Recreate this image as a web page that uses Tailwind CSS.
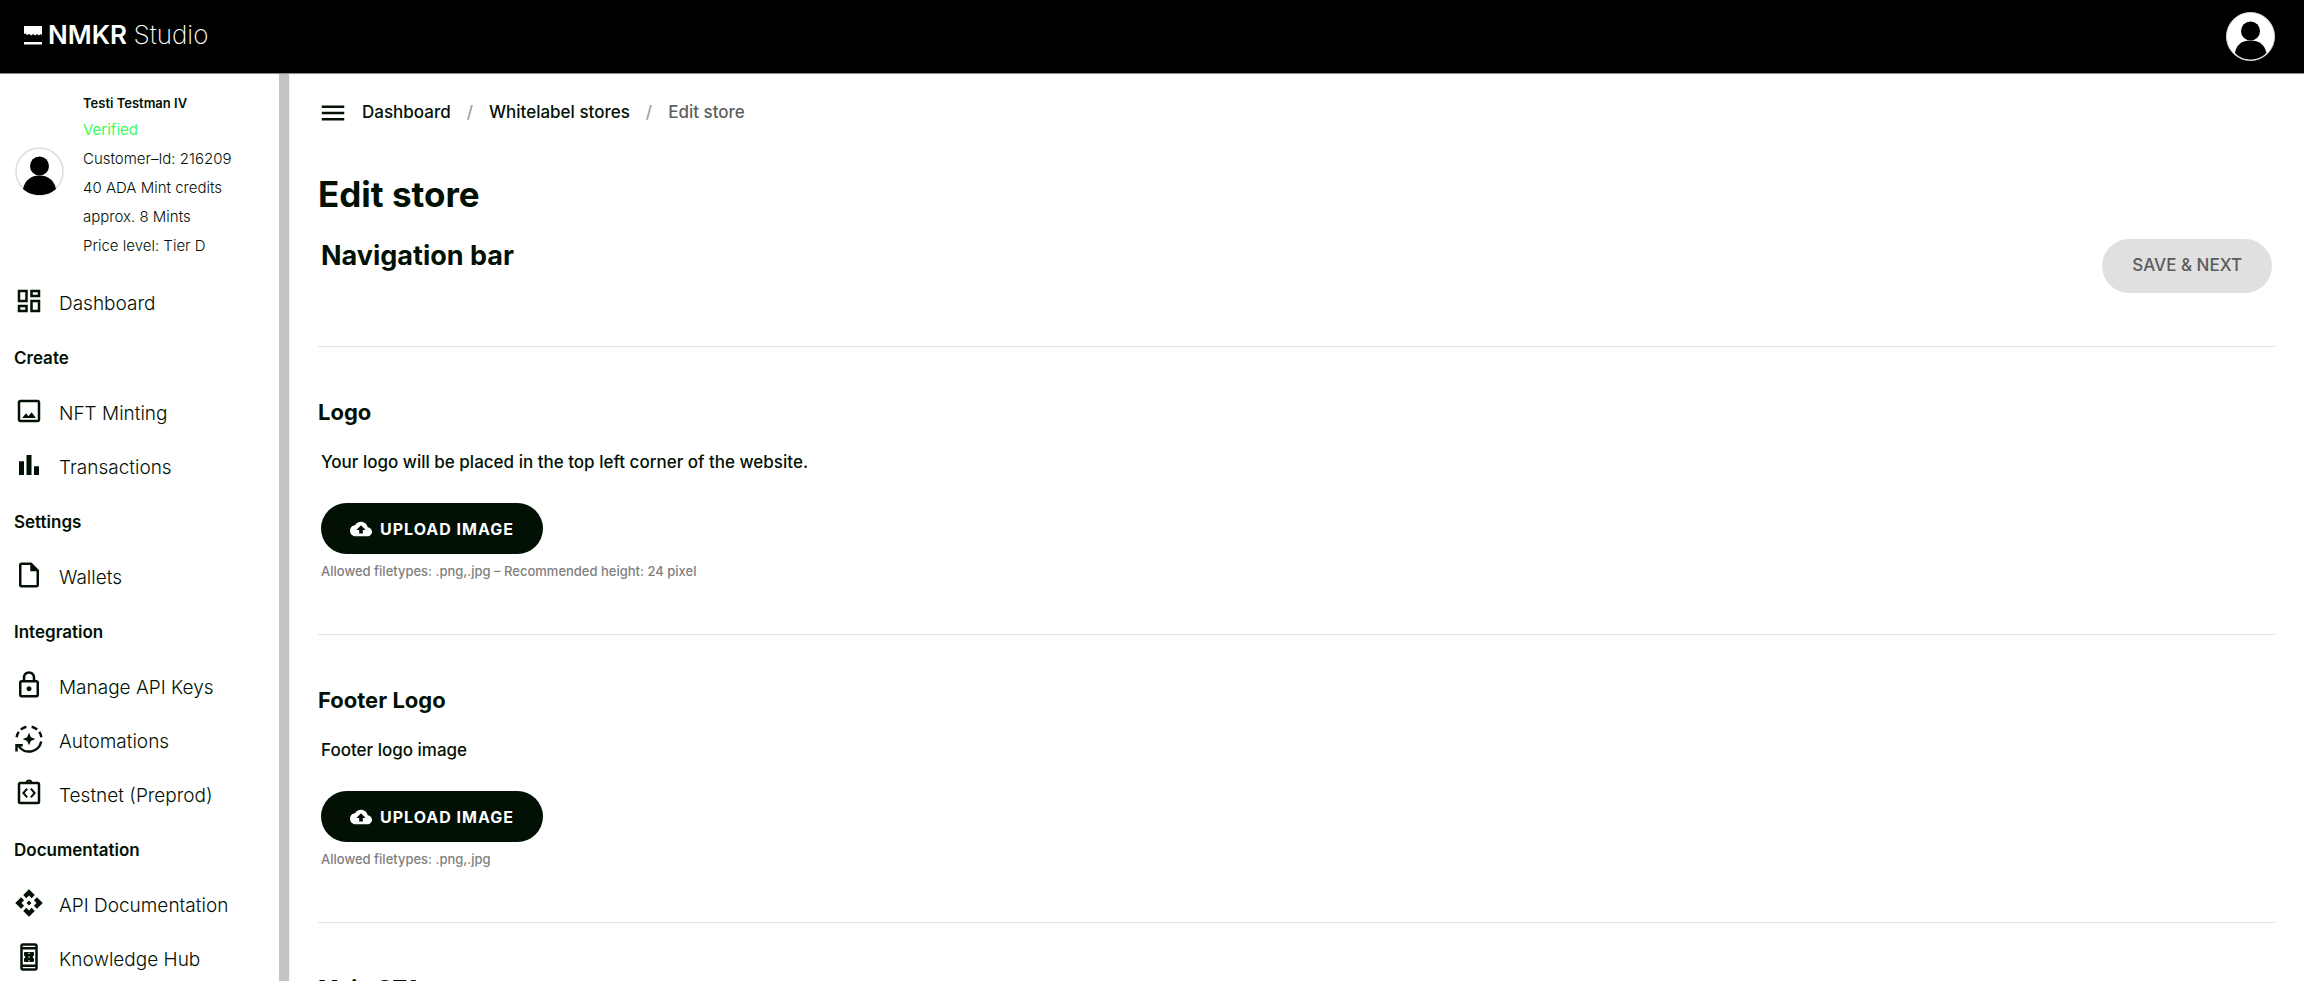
<!DOCTYPE html>
<html lang="en">
<head>
  <meta charset="UTF-8">
  <meta name="viewport" content="width=device-width, initial-scale=1.0">
  <title>Edit store - NMKR Studio</title>
  <script src="https://cdn.jsdelivr.net/npm/@tailwindcss/browser@4"></script>
</head>
<body class="h-screen flex flex-col overflow-hidden bg-white font-['Inter',sans-serif] text-[#021104]">

  <!-- Top bar -->
  <header class="h-[74px] shrink-0 flex items-center justify-between bg-black border-b border-[#8a8a8a] pl-6 pr-[29px]">
    <a href="#" class="flex items-center gap-1.5 text-white text-[26px] leading-8 pb-1">
      <svg class="w-[18px] h-5" viewBox="0 0 18 20" fill="currentColor" aria-hidden="true">
        <path d="M0 1h18v9l-1.500-1-1.500 1.500L13 9l-1.500 1.500L9 9l-1.500 1.500L5 9 3 10 1.500 8.500 0 9z"/>
        <path d="M0 17h18v2.500H0z"/>
      </svg>
      <span class="font-semibold">NMKR <span class="font-extralight">Studio</span></span>
    </a>
    <button type="button" aria-label="Account" class="rounded-full">
      <svg class="w-[49px] h-[49px]" viewBox="0 0 49 49" aria-hidden="true">
        <circle cx="24.500" cy="24.500" r="24" fill="#fff" stroke="#ddd"/>
        <circle cx="24.500" cy="19" r="9.500" fill="#000"/>
        <path d="M9 41C10 33 16 28.500 24.500 28.500S39 33 40.500 41C36 45.500 30 47.500 24.500 47.500S13 45.500 9 41z" fill="#000"/>
      </svg>
    </button>
  </header>

  <div class="flex-1 min-h-0 flex">

    <!-- Sidebar -->
    <aside class="w-[289px] shrink-0 overflow-y-auto [scrollbar-width:none] border-r-[10px] border-[#c4c4c4] shadow-sm">
      <div class="flex items-center gap-[19px] pl-[15px] pt-[17px]">
        <svg class="w-[49px] h-[49px] shrink-0 mb-2" viewBox="0 0 49 49" aria-hidden="true">
          <circle cx="24.500" cy="24.500" r="23.500" fill="#fff" stroke="#ddd" stroke-width="1.500"/>
          <circle cx="24.500" cy="19" r="9.500" fill="#000"/>
          <path d="M8 42C10 33 16 28.500 24.500 28.500S39 33 41 42C36 46.500 30 48 24.500 48S13 46.500 8 42z" fill="#000"/>
        </svg>
        <div class="text-[15px] leading-[29px] font-light">
          <p class="text-[13px] leading-6 font-semibold">Testi Testman IV</p>
          <p class="text-[#3dfb62] font-normal">Verified</p>
          <p>Customer–Id: 216209</p>
          <p>40 ADA Mint credits</p>
          <p>approx. 8 Mints</p>
          <p>Price level: Tier D</p>
        </div>
      </div>

      <nav class="mt-[17px] pl-3.5 text-[19px] font-light">
        <a href="#" class="flex items-center gap-[15px] h-[54px]">
          <svg class="w-[30px] h-[30px] mb-1.5" viewBox="0 0 24 24" fill="currentColor"><path d="M19 5v2h-4V5h4M9 5v6H5V5h4m10 8v6h-4v-6h4M9 17v2H5v-2h4M21 3h-8v6h8V3zM11 3H3v10h8V3zm10 8h-8v10h8V11zm-10 4H3v6h8v-6z"/></svg>
          Dashboard
        </a>
        <h2 class="h-14 flex items-center text-[17px] font-semibold">Create</h2>
        <a href="#" class="flex items-center gap-[15px] h-[54px]">
          <svg class="w-[30px] h-[30px] mb-1.5" viewBox="0 0 24 24" fill="currentColor"><path d="M19 5v14H5V5h14m0-2H5c-1.100 0-2 .9-2 2v14c0 1.100.9 2 2 2h14c1.100 0 2-.9 2-2V5c0-1.100-.9-2-2-2zM6.500 17.500h11l-3.400-4.600-2.600 3.200-1.900-2.300z"/></svg>
          NFT Minting
        </a>
        <a href="#" class="flex items-center gap-[15px] h-[54px]">
          <svg class="w-[30px] h-[30px] mb-1.5" viewBox="0 0 24 24" fill="currentColor"><path d="M4 9h4v11H4zM16 13h4v7h-4zM10 4h4v16h-4z"/></svg>
          Transactions
        </a>
        <h2 class="h-14 flex items-center text-[17px] font-semibold">Settings</h2>
        <a href="#" class="flex items-center gap-[15px] h-[54px]">
          <svg class="w-[30px] h-[30px] mb-1.5" viewBox="0 0 24 24" fill="currentColor"><path d="M14 2H6c-1.100 0-2 .9-2 2v16c0 1.100.9 2 2 2h12c1.100 0 2-.9 2-2V8l-6-6zM6 20V4h7v5h5v11H6z"/></svg>
          Wallets
        </a>
        <h2 class="h-14 flex items-center text-[17px] font-semibold">Integration</h2>
        <a href="#" class="flex items-center gap-[15px] h-[54px]">
          <svg class="w-[30px] h-[30px] mb-1.5" viewBox="0 0 24 24" fill="currentColor"><path d="M18 8h-1V6c0-2.760-2.240-5-5-5S7 3.240 7 6v2H6c-1.100 0-2 .9-2 2v10c0 1.100.9 2 2 2h12c1.100 0 2-.9 2-2V10c0-1.100-.9-2-2-2zM9 6c0-1.660 1.340-3 3-3s3 1.340 3 3v2H9V6zm9 14H6V10h12v10zm-6-3c1.100 0 2-.9 2-2s-.9-2-2-2-2 .9-2 2 .9 2 2 2z"/></svg>
          Manage API Keys
        </a>
        <a href="#" class="flex items-center gap-[15px] h-[54px]">
          <svg class="w-[30px] h-[30px] mb-1.5" viewBox="0 0 24 24" fill="currentColor">
            <path d="M12 7l-1.500 3.500L7 12l3.500 1.500L12 17l1.500-3.500L17 12l-3.500-1.500zM1 16h6v2H3v4H1z"/>
            <path d="M2.100 10.600a10 10 0 0 1 1.700-4.300M5.500 4.400a10 10 0 0 1 4.400-2.200M14.100 2.200a10 10 0 0 1 4.400 2.200M20.200 6.300a10 10 0 0 1 1.700 4.300M21.800 14a10 10 0 0 1-18.500 3" fill="none" stroke="currentColor" stroke-width="2"/>
          </svg>
          Automations
        </a>
        <a href="#" class="flex items-center gap-[15px] h-[54px]">
          <svg class="w-[30px] h-[30px] mb-1.5" viewBox="0 0 24 24" fill="none" stroke="currentColor" stroke-width="2">
            <rect x="4" y="4" width="16" height="16" rx="1"/>
            <path d="M10.500 8.500L7.500 12l3 3.500M13.500 8.500l3 3.500-3 3.500" stroke-width="1.600"/>
            <path d="M9 4h1c0-2.700 4-2.700 4 0h1" stroke-width="1.600"/>
          </svg>
          Testnet (Preprod)
        </a>
        <h2 class="h-14 flex items-center text-[17px] font-semibold">Documentation</h2>
        <a href="#" class="flex items-center gap-[15px] h-[54px]">
          <svg class="w-[30px] h-[30px] mb-1.5" viewBox="0 0 24 24" fill="currentColor"><path d="M14 12l-2 2-2-2 2-2 2 2zm-2-6l2.120 2.120 2.500-2.500L12 1 7.380 5.620l2.500 2.500L12 6zm-6 6l2.120-2.120-2.500-2.500L1 12l4.620 4.620 2.500-2.500L6 12zm12 0l-2.120 2.120 2.500 2.500L23 12l-4.620-4.620-2.500 2.500L18 12zm-6 6l-2.120-2.120-2.500 2.500L12 23l4.620-4.620-2.500-2.500L12 18z"/></svg>
          API Documentation
        </a>
        <a href="#" class="flex items-center gap-[15px] h-[54px]">
          <svg class="w-[30px] h-[30px] mb-1.5" viewBox="0 0 24 24" fill="currentColor" fill-rule="evenodd"><path d="M17 1H7c-1.100 0-2 .9-2 2v18c0 1.100.9 2 2 2h10c1.100 0 2-.9 2-2V3c0-1.100-.9-2-2-2zM7 4V3h10v1H7zm0 14V6h10v12H7zm0 3v-1h10v1H7zM16 11V9c0-.55-.45-1-1-1H9c-.55 0-1 .45-1 1v2c.55 0 1 .45 1 1s-.45 1-1 1v2c0 .55.45 1 1 1h6c.55 0 1-.45 1-1v-2c-.55 0-1-.45-1-1s.45-1 1-1zm-3.500 4.500h-1v-1h1zm0-3h-1v-1h1zm0-3h-1v-1h1z"/></svg>
          Knowledge Hub
        </a>
      </nav>
    </aside>

    <!-- Content -->
    <main class="flex-1 min-w-0 overflow-y-auto [scrollbar-width:none] px-[29px] pt-5">
      <nav aria-label="Breadcrumb" class="flex items-center h-[38px] text-[17px] font-medium">
        <button type="button" aria-label="Toggle menu" class="mr-3.5">
          <svg class="w-[30px] h-[30px]" viewBox="0 0 24 24" fill="currentColor"><path d="M3 18h18v-2H3v2zm0-5h18v-2H3v2zm0-7v2h18V6H3z"/></svg>
        </button>
        <a href="#">Dashboard</a>
        <span class="mx-4 text-[#9e9e9e]">/</span>
        <a href="#">Whitelabel stores</a>
        <span class="mx-4 text-[#9e9e9e]">/</span>
        <span class="text-[#5f5f5f]">Edit store</span>
      </nav>

      <h1 class="mt-[42px] text-[35px] leading-10 font-bold">Edit store</h1>

      <div class="mt-[25px] mb-[53px] px-[3px] flex items-start justify-between">
        <h2 class="text-[27px] leading-[34px] font-bold">Navigation bar</h2>
        <button type="button" disabled class="h-[54px] px-[30px] rounded-full bg-[#e0e0e0] text-[#5c5c5c] text-[17px] font-medium">SAVE &amp; NEXT</button>
      </div>

      <section class="border-t border-[#e4e4e4] pt-[50px] pb-[53px]">
        <h3 class="text-[22px] leading-[30px] font-bold">Logo</h3>
        <div class="pl-[3px]">
          <p class="mt-[23px] text-[17px] leading-6 font-medium">Your logo will be placed in the top left corner of the website.</p>
          <button type="button" class="mt-[29px] h-[51px] px-[29px] flex items-center gap-2 rounded-full bg-[#021104] text-white text-base font-bold tracking-[1px]">
            <svg class="w-[22px] h-[22px]" viewBox="0 0 24 24" fill="currentColor"><path d="M19.350 10.040C18.670 6.590 15.640 4 12 4 9.110 4 6.600 5.640 5.350 8.040 2.340 8.360 0 10.910 0 14c0 3.310 2.690 6 6 6h13c2.760 0 5-2.240 5-5 0-2.640-2.050-4.780-4.650-4.960zM14 13v4h-4v-4H7l5-5 5 5h-3z"/></svg>
            UPLOAD IMAGE
          </button>
          <p class="mt-[7px] text-[13px] leading-5 font-medium text-[#808080]">Allowed filetypes: .png,.jpg – Recommended height: 24 pixel</p>
        </div>
      </section>

      <section class="border-t border-[#e4e4e4] pt-[50px] pb-[53px]">
        <h3 class="text-[22px] leading-[30px] font-bold">Footer Logo</h3>
        <div class="pl-[3px]">
          <p class="mt-[23px] text-[17px] leading-6 font-medium">Footer logo image</p>
          <button type="button" class="mt-[29px] h-[51px] px-[29px] flex items-center gap-2 rounded-full bg-[#021104] text-white text-base font-bold tracking-[1px]">
            <svg class="w-[22px] h-[22px]" viewBox="0 0 24 24" fill="currentColor"><path d="M19.350 10.040C18.670 6.590 15.640 4 12 4 9.110 4 6.600 5.640 5.350 8.040 2.340 8.360 0 10.910 0 14c0 3.310 2.690 6 6 6h13c2.760 0 5-2.240 5-5 0-2.640-2.050-4.780-4.650-4.960zM14 13v4h-4v-4H7l5-5 5 5h-3z"/></svg>
            UPLOAD IMAGE
          </button>
          <p class="mt-[7px] text-[13px] leading-5 font-medium text-[#808080]">Allowed filetypes: .png,.jpg</p>
        </div>
      </section>

      <section class="border-t border-[#e4e4e4] pt-[50px] pb-[53px]">
        <h3 class="text-[22px] leading-[30px] font-bold">Main CTA</h3>
      </section>
    </main>
  </div>
</body>
</html>
